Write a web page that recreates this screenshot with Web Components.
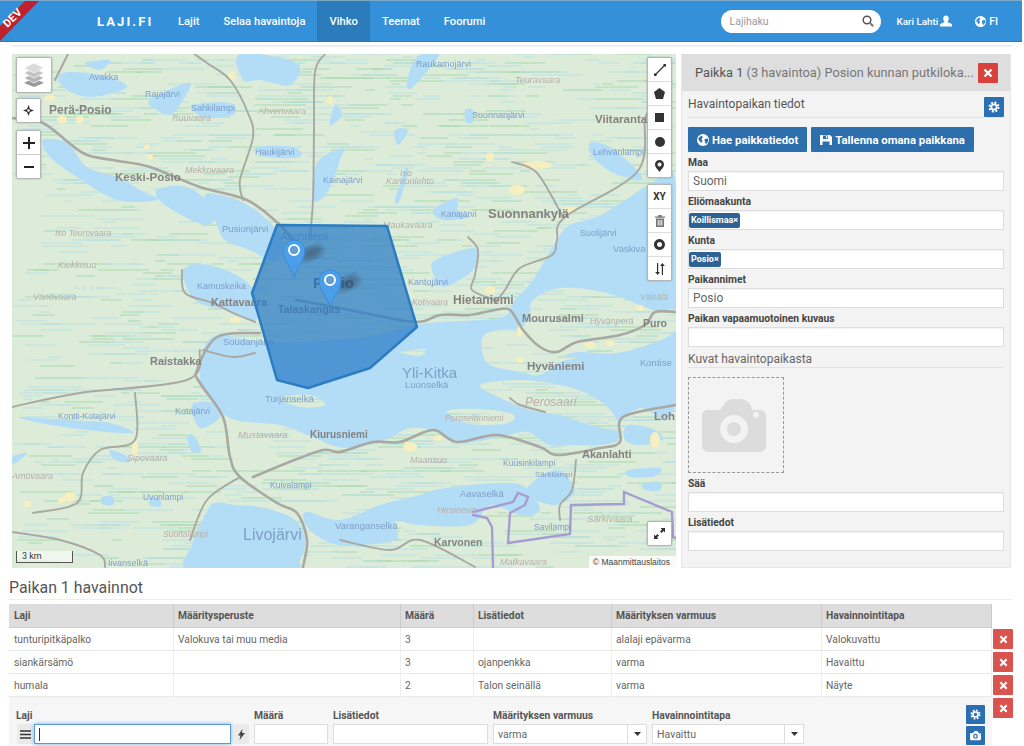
<!DOCTYPE html>
<html lang="fi">
<head>
<meta charset="utf-8">
<title>Laji.fi</title>
<style>
  html, body { margin: 0; padding: 0; height: 746px; overflow: hidden; background: #fff; }
  body { font-family: Roboto, "Liberation Sans", sans-serif; font-size: 12px; color: #555; }
  main-row { margin: 7px 0 0 12px; }
  .rule { height: 2px; margin: 3px 12px 0; background: #eee; }
</style>
</head>
<body>
<laji-navbar></laji-navbar>
<div class="rule"></div>
<main-row>
  <map-view></map-view>
  <place-panel></place-panel>
</main-row>
<obs-section></obs-section>

<script>
// small inline icons, shared by all components
const gear = (s = 12) => `<svg width="${s}" height="${s}" viewBox="0 0 12 12" fill="none" stroke="currentColor"><circle cx="6" cy="6" r="4.4" stroke-width="2.2" stroke-dasharray="1.9 1.55"/><circle cx="6" cy="6" r="2.7" stroke-width="1.8"/></svg>`;
const cross = (s = 10) => `<svg width="${s}" height="${s}" viewBox="0 0 10 10" stroke="currentColor" stroke-width="2.4"><path d="M1.5 1.5l7 7M8.5 1.5l-7 7"/></svg>`;
const camera = (s = 12) => `<svg width="${s}" height="${s}" viewBox="0 0 64 54"><path fill="currentColor" fill-rule="evenodd" d="M6 12h12l3-4C24 3 27 1 32 1h6c5 0 9 3 11 7l1 4h8c3 0 6 2 6 6v30c0 3-3 6-6 6H6c-3 0-6-3-6-6V18c0-4 3-6 6-6zM32 17a14 14 0 1 0 .1 0zM32 24a7 7 0 1 1-.1 0zM54 14a3 3 0 1 0 .1 0z"/></svg>`;
const globe = (s, bg) => `<svg width="${s}" height="${s}" viewBox="0 0 12 12"><circle cx="6" cy="6" r="6" fill="currentColor"/><path fill="${bg}" d="M2 3.5l2.5-1.8L6 3 4.5 5 5.5 7 4 9 2.5 7 1.2 5zM7.5 5l3.3-.6.5 2.5-2 3-1.3-1.5z"/></svg>`;
const save = (s = 12) => `<svg width="${s}" height="${s}" viewBox="0 0 12 12"><path fill="currentColor" fill-rule="evenodd" d="M0 1h10l2 2v8H0zM3 1.5v3.5h5V1.5zM6 2h1.3v2.3H6zM2.5 7.5V11h7V7.5z"/></svg>`;
const user = `<svg width="12" height="12" viewBox="0 0 13 12"><path fill="currentColor" d="M6.500 0C8.300 0 9.500 1.300 9.500 3.200 9.500 5 8.500 6.400 8 7l4.300 2c.5.300.7.700.7 1.200V12H0v-1.800c0-.5.200-.9.700-1.200L5 7c-.5-.6-1.500-2-1.500-3.800C3.500 1.300 4.700 0 6.500 0z"/></svg>`;

class LajiNavbar extends HTMLElement {
  constructor() {
    super();
    this.attachShadow({ mode: 'open' }).innerHTML = `
      <style>
        :host { display: flex; align-items: stretch; height: 40px; position: relative; background: #3590da;
          border-top: 1px solid #7fa9c9; border-bottom: 1px solid #2a78b8; color: #fff; font-weight: 500; margin-right: 2px; }
        .ribbon { position: absolute; left: 0; top: 0; }
        .brand { margin-left: 97px; width: 69px; align-self: center; font-size: 13px; font-weight: 700; letter-spacing: 2.1px; }
        a { display: flex; align-items: center; padding: 0 12px; font-size: 11.2px; }
        a.active { background: #2c7cbb; }
        .search { margin-left: auto; align-self: center; width: 160px; height: 23px; box-sizing: border-box; background: #fff; border-radius: 12px;
          display: flex; align-items: center; justify-content: space-between; padding: 0 7px 0 9px; color: #999; font-size: 10.5px; font-weight: 400; }
        .search svg { color: #555; }
        .user { margin-left: 16px; display: flex; align-items: center; gap: 2px; font-size: 9.8px; }
        .lang { margin: 0 24px 0 23px; display: flex; align-items: center; gap: 3px; font-size: 10.5px; }
      </style>
      <svg class="ribbon" width="42" height="42" viewBox="0 0 42 42"><polygon points="25,0 39,0 0,40 0,25" fill="#c0212f"/><text x="0" y="0" transform="translate(7.500,27) rotate(-45)" font-family="Roboto, sans-serif" font-size="11" font-weight="700" fill="#fff" letter-spacing=".4">DEV</text></svg>
      <span class="brand">LAJI.FI</span>
      <a>Lajit</a><a>Selaa havaintoja</a><a class="active">Vihko</a><a>Teemat</a><a>Foorumi</a>
      <div class="search"><span>Lajihaku</span>
        <svg width="12" height="12" viewBox="0 0 12 12" fill="none" stroke="currentColor"><circle cx="5" cy="5" r="3.800" stroke-width="1.500"/><path d="M8 8l3.200 3.200" stroke-width="2" stroke="#777"/></svg></div>
      <span class="user">Kari Lahti ${user}</span>
      <span class="lang">${globe(11, '#3590da')} FI</span>`;
  }
}

// catmull-rom smoothing so that lakes and roads are not polygons
function smooth(p, closed) {
  const n = p.length, at = i => closed ? p[(i + n) % n] : p[Math.max(0, Math.min(n - 1, i))];
  let d = `M${p[0][0]} ${p[0][1]}`;
  for (let i = 0; i < (closed ? n : n - 1); i++) {
    const a = at(i - 1), b = at(i), c = at(i + 1), e = at(i + 2);
    d += `C${(b[0] + (c[0] - a[0]) / 6).toFixed(1)} ${(b[1] + (c[1] - a[1]) / 6).toFixed(1)} ${(c[0] - (e[0] - b[0]) / 6).toFixed(1)} ${(c[1] - (e[1] - b[1]) / 6).toFixed(1)} ${c[0]} ${c[1]}`;
  }
  return d + (closed ? 'Z' : '');
}

const WATER = [
  [[205,345],[222,335],[250,340],[300,342],[370,336],[415,325],[440,322],[480,320],[505,316],[515,300],[533,280],[557,240],[570,225],[597,217],[630,197],[650,185],[676,185],[676,400],[640,408],[622,420],[618,440],[600,445],[575,445],[550,445],[527,432],[500,437],[460,443],[440,432],[410,428],[385,440],[345,448],[310,436],[280,425],[235,420],[215,405],[200,380]],
  [[205,515],[215,503],[235,505],[265,508],[295,520],[305,540],[300,560],[290,570],[190,570],[192,545]],
  [[340,520],[380,505],[420,495],[445,488],[500,483],[525,487],[540,510],[520,515],[490,505],[470,525],[420,525],[395,522],[395,540],[340,545],[310,530],[305,512]],
  [[183,270],[210,265],[250,285],[256,320],[225,310],[195,300]],
  [[205,195],[232,198],[258,212],[282,238],[276,262],[250,250],[225,240],[215,220]],
  [[240,54],[297,63],[290,85],[260,80],[243,80]],
  [[62,73],[100,75],[127,87],[90,97],[63,87]],
  [[150,100],[190,83],[173,113],[157,110]],
  [[192,105],[230,103],[233,115],[203,117]],
  [[257,147],[293,147],[300,157],[267,157]],
  [[317,163],[343,148],[340,160],[327,193],[313,200]],
  [[417,57],[440,53],[413,87],[407,83]],
  [[465,110],[473,110],[473,122],[466,122]],
  [[590,143],[610,147],[637,170],[640,180],[613,173],[593,157]],
  [[433,210],[457,198],[458,210],[470,217],[443,220]],
  [[435,260],[473,248],[477,260],[470,273],[443,287],[433,273]],
  [[192,405],[213,403],[220,417],[200,428]],
  [[20,417],[67,420],[110,423],[133,433],[87,430],[40,423]],
  [[187,437],[193,435],[201,450],[192,452]],
  [[12,457],[27,453],[14,464]],
  [[150,498],[160,500],[160,507],[150,505]],
  [[102,497],[113,497],[113,505],[102,504]],
  [[43,140],[67,143],[87,167],[117,177],[140,190],[157,200],[117,200],[77,177],[50,157]],
  [[157,190],[187,187],[215,210],[205,225],[165,205]],
  [[85,63],[110,60],[100,70]],
  [[395,200],[405,170],[408,172],[400,200]],
  [[335,105],[342,115],[330,125]],
  [[395,130],[408,130],[398,145]],
  [[643,484],[660,482],[660,490],[645,490]],
  [[628,425],[655,430],[662,440],[640,445],[625,440]],
  [[628,470],[660,468],[655,476],[630,477]],
  [[525,492],[555,470],[575,490],[555,505]],
  [[340,425],[355,425],[360,432],[345,432]],
  [[110,450],[125,455],[130,462],[115,460]]
];
const LAND = [
  [[533,300],[560,288],[607,293],[653,310],[676,310],[676,330],[653,343],[617,353],[577,352],[557,357],[540,348],[523,330],[530,317]],
  [[487,333],[523,330],[540,347],[557,355],[577,358],[560,362],[540,375],[520,372],[490,365],[482,350]],
  [[480,385],[520,380],[560,385],[590,395],[610,410],[620,430],[590,425],[560,415],[530,410],[505,400]],
  [[447,411],[480,409],[512,414],[508,423],[470,424]],
  [[280,398],[310,395],[325,405],[300,407]],
  [[530,392],[548,388],[558,392],[540,396]],
  [[400,352],[425,349],[420,356]]
];
const ROADS = [
  [[12,118],[43,123],[83,153],[113,160],[150,167],[200,187],[247,200],[280,225],[296,245]],
  [[325,54],[315,72],[314,130],[313,200],[310,235]],
  [[193,53],[207,63],[230,80],[248,113],[253,137],[240,180],[243,200]],
  [[68,54],[55,80]],
  [[296,300],[350,310],[415,322],[440,315],[470,315],[495,310],[510,310],[523,330],[540,347],[557,352],[577,342],[620,335],[645,325],[655,312],[676,312]],
  [[495,303],[505,290],[520,268],[552,255],[557,240],[565,217],[637,172],[645,120],[650,110]],
  [[512,162],[537,173],[563,217]],
  [[260,333],[217,337],[197,370],[200,383],[223,417],[230,457],[240,477],[277,503],[297,513],[307,540],[303,567]],
  [[12,407],[80,393],[187,380],[200,350]],
  [[135,393],[135,440],[100,450],[83,473],[77,503],[33,513]],
  [[240,477],[207,500],[190,540]],
  [[253,477],[287,463],[323,450],[340,452],[373,442],[400,442],[433,430],[457,442],[497,435],[540,447],[557,455],[600,448],[620,442],[623,417],[676,405]],
  [[182,270],[185,293],[213,303],[233,313],[255,322]],
  [[203,350],[233,357],[255,353]],
  [[468,237],[478,250],[475,275],[472,290],[495,300]],
  [[510,398],[520,405],[545,412]],
  [[576,460],[572,490],[560,505],[560,520]],
  [[12,532],[60,540],[100,555],[105,567]],
  [[340,540],[390,550],[420,540],[475,567]]
];
const BORDER = [
  [[473,512],[513,502],[518,493],[528,497],[525,505],[510,513],[508,543],[570,534],[571,505],[624,504],[624,492],[672,512],[673,537],[676,538]],
  [[473,515],[487,518],[492,527],[493,567]]
];
const SPOTS = [[50,98,6,3],[62,120,5,4],[80,120,4,4],[147,147,3,3],[150,157,3,3],[232,76,4,4],[330,100,3,4],[490,157,4,4],[537,165,16,4],[517,190,8,5],[570,210,6,3],[235,320,6,3],[135,448,3,8],[62,500,4,3],[70,497,6,5],[27,504,4,3],[410,447,7,5],[438,438,4,3],[655,440,5,8],[520,360,4,3],[590,345,6,3],[610,343,5,3],[490,290,5,4],[520,331,3,6],[640,308,4,3]];
// [text, x, baseline, kind, size]
const LABELS = [
  ['Perä-Posio',49,114,'town',12],['Keski-Posio',115,181,'town',11.5],['Avakka',89,80,'lake',9],['Rajajärvi',145,97,'lake',9],['Sahkilampi',191,111,'lake',9],
  ['Ruuvaara',172,121,'hill',9],['Ahvenvaara',258,114,'hill',9],['Haukijärvi',255,155,'lake',9],['Mekkovaara',185,173,'hill',9],['Kainajärvi',323,183,'lake',9],
  ['Iso',400,176,'hill',9],['Kantonlehto',386,184,'hill',9],['Raukamojärvi',416,67,'lake',9],['Suonnanjärvi',472,118,'lake',9],['Teuravaara',515,83,'hill',9],
  ['Viitaranta',595,123,'town',11.5],['Lehvänlampi',593,155,'lake',9],['Suonnankylä',488,218,'town',13],['Kanajärvi',441,217,'lake',8.500],['Maukavaara',383,228,'hill',9],
  ['Pusionjärvi',222,232,'lake',9.500],['Kamuskeika',197,289,'lake',9],['Kattavaara',211,306,'town',11],['Talaskangas',278,313,'town',10.500],['Ahonniemi',281,240,'lake',10],
  ['Posio',313,288,'post',15],['Raistakka',150,365,'town',11],['Soudanjärvi',223,345,'lake',9.500],['Iso Teurovaara',55,236,'hill',8.500],['Kiekkisuo',58,268,'hill',9],
  ['Vänövaara',33,300,'hill',9],['Hietaniemi',453,304,'town',12],['Mourusalmi',522,322,'town',11],['Hyväniemi',527,370,'town',11.500],['Yli-Kitka',402,378,'lake',15],
  ['Luonselkä',405,388,'lake',9.500],['Perosaari',525,406,'hill',12],['Kontise',640,366,'lake',9.500],['Puro',643,327,'town',10.500],['Hyvänperä',590,324,'hill',9],
  ['Kiurusniemi',310,438,'town',10],['Mustavaara',238,438,'hill',9.500],['Turjanselkä',265,402,'lake',9.500],['Kotajärvi',175,414,'lake',9],['Kontti-Kotajärvi',58,419,'lake',8.500],
  ['Livojärvi',243,540,'lake',16],['Varanganselkä',335,529,'lake',9.500],['Karvonen',434,546,'town',10.500],['Akanlahti',582,458,'town',11],['Loh',654,420,'town',11.500],
  ['Maansuo',410,463,'hill',9],['Kuusinkilampi',503,466,'lake',8.500],['Särkilampi',535,477,'lake',8],['Särkivaara',587,522,'hill',9.500],['Hirsineva',437,513,'hill',9.500],
  ['Aavaselkä',460,497,'lake',9.500],['Poroselänniemi',445,421,'hill',8.500],['Suolijärvi',580,236,'lake',9],['Vaskiva',613,252,'lake',9.500],
  ['Kotivaara',412,305,'hill',8.500],['Kantojärvi',408,285,'lake',9],['Sipovaara',127,461,'hill',9],['Amovaara',12,479,'hill',9],['Uvonlampi',143,500,'lake',8.500],
  ['Suottalampi',163,537,'hill',8.500],['Kuivalampi',270,488,'lake',8.500],['Savilampi',534,530,'lake',8.500],['Matkavaara',500,565,'hill',9],
  ['Iivanselkä',108,566,'lake',9],['Väisälä',640,300,'hill',8.500]
];

class MapView extends HTMLElement {
  constructor() {
    super();
    const paths = list => list.map(p => smooth(p, true)).join('');
    // random hatching of the land, like the bog pattern of the basemap
    let seed = 17, green = '', blue = '';
    const rnd = n => { seed = (seed * 16807) % 2147483647; return seed % n; };
    for (let i = 0; i < 1500; i++) {
      const seg = `M${12 + rnd(664)} ${54 + rnd(172) * 3}h${8 + rnd(46)}`;
      if (rnd(3) === 0) green += seg; else blue += seg;
    }
    const tools = (items) => items.map(i => `<div class="tool">${i}</div>`).join('');
    const labels = LABELS.map(([t, x, y, k, s]) => `<text x="${x}" y="${y}" class="${k}" font-size="${s}">${t}</text>`).join('');
    const pin = (x, tip) => `<path d="M${x} ${tip}c-3-10-11-17-11-26a11 11 0 0 1 22 0c0 9-8 16-11 26z" fill="#4a9eea" stroke="#2f7fc7" stroke-width=".6"/>
      <circle cx="${x}" cy="${tip - 27}" r="5" fill="none" stroke="#fff" stroke-width="2"/><circle cx="${x}" cy="${tip - 27}" r="2.300" fill="#7f9ab3"/>`;
    this.attachShadow({ mode: 'open' }).innerHTML = `
      <style>
        :host { display: block; position: relative; width: 664px; height: 514px; overflow: hidden; background: #dcecd9; }
        svg.base { display: block; }
        text { font-family: "Liberation Sans", Arial, sans-serif; }
        .town { fill: #85827f; font-weight: 700; }
        .post { fill: #5f6266; font-weight: 700; }
        .lake { fill: #7e9fc9; }
        .hill { fill: #b9aeaa; font-style: italic; }
        .box { position: absolute; box-sizing: border-box; background: #fff; border: 1px solid #b5b5b5; border-radius: 2px; box-shadow: 0 0 2px rgba(0,0,0,.25); color: #333; }
        .tool { height: 24px; display: flex; align-items: center; justify-content: center; border-bottom: 1px solid #ddd; box-sizing: border-box; font: 700 10px Roboto, sans-serif; }
        .tool:last-child { border-bottom: 0; }
        .scale { position: absolute; left: 4px; top: 497px; width: 57px; height: 12px; box-sizing: border-box; border: 1px solid #555; border-top: 0; background: rgba(255,255,255,.55); font: 9px Roboto, sans-serif; color: #333; padding-left: 5px; line-height: 10px; }
        .attr { position: absolute; right: 0; bottom: 0; padding: 0 6px 0 4px; height: 12px; line-height: 12px; background: rgba(255,255,255,.85); font: 8.500px/12px "Liberation Sans", sans-serif; color: #444; }
      </style>
      <svg class="base" width="664" height="514" viewBox="12 54 664 514">
        <defs>
          <filter id="soft"><feGaussianBlur stdDeviation=".45"/></filter>
          <filter id="shade"><feGaussianBlur stdDeviation="3"/></filter>
          <mask id="landonly" maskUnits="userSpaceOnUse" x="12" y="54" width="664" height="514">
            <rect x="12" y="54" width="664" height="514" fill="#fff"/>
            <path d="${paths(WATER)}" fill="#000"/><path d="${paths(LAND)}" fill="#fff"/>
          </mask>
        </defs>
        <g filter="url(#soft)">
          <path d="${paths(WATER)}" fill="#b3dcf6"/>
          <path d="${paths(LAND)}" fill="#dcecd9"/>
          <g mask="url(#landonly)" fill="none" stroke-width="1">
            <path d="${green}" stroke="#a8d9b0"/><path d="${blue}" stroke="#b8dfe2"/>
          </g>
          ${SPOTS.map(([x, y, a, b]) => `<ellipse cx="${x}" cy="${y}" rx="${a}" ry="${b}" fill="#f6f0c0"/>`).join('')}
          <g fill="none" stroke-linecap="round" stroke-linejoin="round">
            ${ROADS.map((r, i) => `<path d="${smooth(r)}" stroke="#a9a8a2" stroke-width="${i < 1 || i === 4 || i === 11 || i === 7 ? 2.600 : 1.900}"/>`).join('')}
            ${BORDER.map(r => `<path d="M${r.map(p => p.join(' ')).join('L')}" stroke="#a79cd2" stroke-width="2.400" stroke-linejoin="miter"/>`).join('')}
          </g>
          ${labels}
        </g>
        <polygon points="277,225 387,226 417,327 370,368 308,388 277,380 252,293" fill="#2a7bc6" fill-opacity=".72" stroke="#2b7cc2" stroke-width="2.500" stroke-linejoin="round"/>
        <ellipse cx="312" cy="253" rx="12" ry="6" transform="rotate(-25 312 253)" fill="#333" opacity=".45" filter="url(#shade)"/>
        <ellipse cx="348" cy="283" rx="12" ry="6" transform="rotate(-25 348 283)" fill="#333" opacity=".45" filter="url(#shade)"/>
        ${pin(294, 277)}${pin(330, 307)}
      </svg>
      <div class="box" style="left:4px;top:3px;width:36px;height:36px;display:flex;align-items:center;justify-content:center">
        <svg width="24" height="24" viewBox="0 0 24 24"><path d="M12 15l10 5-10 4-10-4z" fill="#999"/><path d="M12 10l10 5-10 5-10-5z" fill="#b5b5b5" stroke="#fff" stroke-width=".7"/><path d="M12 5l10 5-10 5-10-5z" fill="#c4c4c4" stroke="#fff" stroke-width=".7"/><path d="M12 0l10 5-10 5-10-5z" fill="#dadada" stroke="#fff" stroke-width=".7"/></svg>
      </div>
      <div class="box" style="left:4px;top:44px;width:25px;height:25px;display:flex;align-items:center;justify-content:center">
        <svg width="11" height="11" viewBox="0 0 11 11"><path d="M5.500 0l1.500 4 4 1.500-4 1.500-1.500 4L4 7 0 5.500 4 4z" fill="#333"/><circle cx="5.500" cy="5.500" r="1.300" fill="#fff"/></svg>
      </div>
      <div class="box" style="left:4px;top:76px;width:25px;height:49px">
        <div class="tool" style="border-color:#ccc"><svg width="12" height="12" viewBox="0 0 12 12"><path d="M0 6h12M6 0v12" stroke="#222" stroke-width="2"/></svg></div>
        <div class="tool"><svg width="12" height="12" viewBox="0 0 12 12"><path d="M1 6h10" stroke="#222" stroke-width="2"/></svg></div>
      </div>
      <div class="box" style="left:635px;top:3px;width:25px;height:121px">${tools([
        '<svg width="12" height="12" viewBox="0 0 12 12"><path d="M1.500 10.500l9-9" stroke="#333" stroke-width="1.200"/><rect x="0" y="9.500" width="2.500" height="2.500" fill="#333"/><rect x="9.500" y="0" width="2.500" height="2.500" fill="#333"/></svg>',
        '<svg width="11" height="11" viewBox="0 0 11 11"><path d="M5.500 0l5.500 4-2 7H2L0 4z" fill="#333"/></svg>',
        '<svg width="9" height="9"><rect width="9" height="9" fill="#333"/></svg>',
        '<svg width="10" height="10"><circle cx="5" cy="5" r="5" fill="#333"/></svg>',
        '<svg width="9" height="12" viewBox="0 0 9 12"><path fill="#333" fill-rule="evenodd" d="M4.500 0a4.500 4.500 0 0 1 4.500 4.500C9 7.500 5.500 10 4.500 12 3.500 10 0 7.500 0 4.500A4.500 4.500 0 0 1 4.500 0zM4.500 2.500a2 2 0 1 0 .1 0z"/></svg>'
      ])}</div>
      <div class="box" style="left:635px;top:130px;width:25px;height:97px">${tools([
        'XY',
        '<svg width="10" height="12" viewBox="0 0 10 12"><path fill="#777" fill-rule="evenodd" d="M3.500 0h3l.5 1.500h3v1.200H0V1.500h3zM1 3.500h8V12H1zM2.800 5v5.500h.9V5zM4.600 5v5.500h.9V5zM6.400 5v5.500h.9V5z"/></svg>',
        '<svg width="11" height="11" viewBox="0 0 11 11"><path fill="#333" fill-rule="evenodd" d="M5.500 0a5.500 5.500 0 1 1-.1 0zM5.500 3a2.500 2.500 0 1 0 .1 0z"/></svg>',
        '<svg width="10" height="12" viewBox="0 0 10 12" fill="#333"><path d="M2 0h1.200v9H5L2.600 12 .2 9H2zM6.800 12H8V3h1.800L7.400 0 5 3h1.800z"/></svg>'
      ])}</div>
      <div class="box" style="left:635px;top:467px;width:25px;height:25px;display:flex;align-items:center;justify-content:center">
        <svg width="11" height="11" viewBox="0 0 11 11"><path d="M6.500 0H11v4.500L9.500 3 7.500 5 6 3.500 8 1.500zM4.500 11H0V6.500L1.500 8l2-2L5 7.500 3 9.500z" fill="#333"/></svg>
      </div>
      <div class="scale">3 km</div>
      <div class="attr">© Maanmittauslaitos</div>`;
  }
}

class FormField extends HTMLElement {
  constructor() {
    super();
    this.attachShadow({ mode: 'open' }).innerHTML = `
      <style>
        :host { display: block; margin-bottom: 2px; }
        label { display: block; height: 17px; line-height: 17px; font-size: 10.3px; font-weight: 700; color: #444; }
        .input { height: 20px; box-sizing: border-box; border: 1px solid #ddd; background: #fff; padding: 0 4px; display: flex; align-items: center; font-size: 12px; color: #666; box-shadow: inset 0 1px 1px rgba(0,0,0,.05); }
        .tag { margin-left: -4px; height: 15px; line-height: 15px; padding: 0 2px; border-radius: 2px; background: #2d6294; color: #fff; font-size: 9px; font-weight: 700; }
      </style>
      <label></label><div class="input"></div>`;
    this.shadowRoot.querySelector('label').textContent = this.getAttribute('label');
    const box = this.shadowRoot.querySelector('.input');
    if (this.hasAttribute('tag')) box.innerHTML = `<span class="tag">${this.getAttribute('tag')}×</span>`;
    else box.textContent = this.getAttribute('value') || '';
  }
}

class PlacePanel extends HTMLElement {
  constructor() {
    super();
    this.attachShadow({ mode: 'open' }).innerHTML = `
      <style>
        :host { display: block; width: 330px; height: 514px; box-sizing: border-box; background: #f3f3f3; border: 1px solid #e6e6e6; border-top: 0; }
        header { height: 37px; background: #dedede; display: flex; align-items: center; justify-content: space-between; padding: 0 12px 0 13px; font-size: 12.8px; color: #777; white-space: nowrap; }
        header b { font-weight: 400; color: #555; }
        .del { width: 20px; height: 20px; background: #d9413d; color: #fff; display: flex; align-items: center; justify-content: center; border-radius: 1px; }
        .body { padding: 0 6px; }
        .title { height: 27px; box-sizing: border-box; border-bottom: 1px solid #e2e2e2; display: flex; align-items: center; justify-content: space-between; font-size: 12px; color: #555; }
        .gear { width: 20px; height: 20px; background: #2b6fb3; color: #fff; display: flex; align-items: center; justify-content: center; margin-top: 5px; border-radius: 1px; }
        .btns { display: flex; gap: 4px; margin: 9px 0 2px; }
        .btn { height: 25px; padding: 0 9px; display: flex; align-items: center; gap: 3px; background: #2d6ead; color: #fff; font-size: 11.35px; font-weight: 700; border-radius: 1px; white-space: nowrap; }
        h4 { margin: 0 0 9px; height: 19px; line-height: 20px; box-sizing: border-box; border-bottom: 1px solid #e2e2e2; font-size: 12px; font-weight: 400; color: #666; }
        .drop { width: 96px; height: 96px; box-sizing: border-box; border: 1px dashed #999; padding-right: 4px; display: flex; align-items: center; justify-content: center; color: #dcdcdc; }
      </style>
      <header><span><b>Paikka 1</b> (3 havaintoa) Posion kunnan putkiloka...</span><span class="del">${cross()}</span></header>
      <div class="body">
        <div class="title"><span>Havaintopaikan tiedot</span><span class="gear">${gear()}</span></div>
        <div class="btns">
          <span class="btn">${globe(12, '#2d6ead')} Hae paikkatiedot</span>
          <span class="btn">${save()} Tallenna omana paikkana</span>
        </div>
        <form-field label="Maa" value="Suomi"></form-field>
        <form-field label="Eliömaakunta" tag="Koillismaa"></form-field>
        <form-field label="Kunta" tag="Posio"></form-field>
        <form-field label="Paikannimet" value="Posio"></form-field>
        <form-field label="Paikan vapaamuotoinen kuvaus"></form-field>
        <h4>Kuvat havaintopaikasta</h4>
        <div class="drop">${camera(64)}</div>
        <form-field label="Sää" style="margin-top:2px"></form-field>
        <form-field label="Lisätiedot"></form-field>
      </div>`;
  }
}

class MainRow extends HTMLElement {
  constructor() {
    super();
    this.attachShadow({ mode: 'open' }).innerHTML = `
      <style>:host { display: flex; gap: 5px; }</style><slot></slot>`;
  }
}

const ROWS = [
  ['tunturipitkäpalko', 'Valokuva tai muu media', '3', '', 'alalaji epävarma', 'Valokuvattu'],
  ['siankärsämö', '', '3', 'ojanpenkka', 'varma', 'Havaittu'],
  ['humala', '', '2', 'Talon seinällä', 'varma', 'Näyte']
];

class ObsSection extends HTMLElement {
  constructor() {
    super();
    const head = ['Laji', 'Määritysperuste', 'Määrä', 'Lisätiedot', 'Määrityksen varmuus', 'Havainnointitapa'];
    const caret = '<svg width="7" height="4"><path d="M0 0h7L3.500 4z" fill="#333"/></svg>';
    this.attachShadow({ mode: 'open' }).innerHTML = `
      <style>
        :host { display: block; margin: 8px 12px 0 9px; }
        h3 { margin: 0 0 4px; height: 24px; line-height: 23px; box-sizing: border-box; border-bottom: 1px solid #eee; font-size: 15.9px; font-weight: 400; color: #555; }
        .wrap { display: flex; gap: 1px; }
        .left { width: 983px; flex: none; }
        .row { display: grid; grid-template-columns: 165px 227px 73px 138px 210px 170px; height: 23px; border-bottom: 1px solid #e8e8e8; box-sizing: border-box; }
        .row > span { padding: 0 4px; line-height: 23px; border-right: 1px solid #eee; font-size: 10.3px; color: #666; white-space: nowrap; }
        .row > span:first-child { padding-left: 5px; }
        .row.head { height: 24px; background: #ddd; border-bottom: 1px solid #ccc; }
        .row.head > span { font-weight: 700; color: #555; line-height: 23px; border-right-color: #ccc; }
        .form { height: 49px; background: #f6f6f6; display: flex; padding: 11px 0 0 7px; box-sizing: border-box; position: relative; }
        .col { display: flex; flex-direction: column; margin-right: 5px; }
        .col label { height: 16px; line-height: 15px; font-size: 10.3px; font-weight: 700; color: #555; }
        .ctrl { height: 20px; box-sizing: border-box; background: #fff; border: 1px solid #ddd; display: flex; align-items: center; font-size: 10.5px; color: #666; padding-left: 4px; }
        .sel { justify-content: space-between; padding-right: 0; }
        .sel i { width: 18px; height: 100%; border-left: 1px solid #ddd; display: flex; align-items: center; justify-content: center; }
        .addon { width: 16px; height: 20px; background: #eaeaea; display: flex; align-items: center; justify-content: center; flex: none; border-radius: 2px 0 0 2px; }
        .focus { width: 197px; height: 20px; margin-left: 1px; box-sizing: border-box; background: #fff; border: 1px solid #5b9bd5; box-shadow: 0 0 4px #66afe9; display: flex; align-items: center; padding-left: 4px; }
        .focus::before { content: ""; width: 1px; height: 13px; background: #333; }
        .side { position: absolute; right: 7px; top: 8px; display: flex; flex-direction: column; gap: 2px; }
        .side span { width: 19px; height: 19px; background: #2b6fb3; color: #fff; display: flex; align-items: center; justify-content: center; border-radius: 1px; }
        .dels { display: flex; flex-direction: column; gap: 3px; margin-top: 25px; }
        .dels span { width: 20px; height: 20px; background: #d9534f; color: #fff; display: flex; align-items: center; justify-content: center; border-radius: 1px; }
      </style>
      <h3>Paikan 1 havainnot</h3>
      <div class="wrap">
        <div class="left">
          <div class="row head">${head.map(h => `<span>${h}</span>`).join('')}</div>
          ${ROWS.map(r => `<div class="row">${r.map(c => `<span>${c}</span>`).join('')}</div>`).join('')}
          <div class="form">
            <div class="col"><label>Laji</label>
              <div style="display:flex;margin-left:1px">
                <span class="addon"><svg width="11" height="9"><path d="M0 1h11M0 4.500h11M0 8h11" stroke="#333" stroke-width="1.500"/></svg></span>
                <span class="focus"></span>
                <span class="addon" style="margin-left:2px"><svg width="7" height="11" viewBox="0 0 7 11"><path d="M4.500 0L0 6.500h2.500L1.500 11 7 4H4z" fill="#444"/></svg></span>
              </div>
            </div>
            <div class="col" style="width:74px"><label>Määrä</label><div class="ctrl"></div></div>
            <div class="col" style="width:155px"><label>Lisätiedot</label><div class="ctrl"></div></div>
            <div class="col" style="width:154px"><label>Määrityksen varmuus</label><div class="ctrl sel">varma<i>${caret}</i></div></div>
            <div class="col" style="width:152px"><label>Havainnointitapa</label><div class="ctrl sel">Havaittu<i>${caret}</i></div></div>
            <div class="side"><span>${gear(11)}</span><span>${camera(11)}</span></div>
          </div>
        </div>
        <div class="dels">${('<span>' + cross(9) + '</span>').repeat(4)}</div>
      </div>`;
  }
}

window.customElements.define('form-field', FormField);
window.customElements.define('laji-navbar', LajiNavbar);
window.customElements.define('map-view', MapView);
window.customElements.define('place-panel', PlacePanel);
window.customElements.define('main-row', MainRow);
window.customElements.define('obs-section', ObsSection);
</script>
</body>
</html>
